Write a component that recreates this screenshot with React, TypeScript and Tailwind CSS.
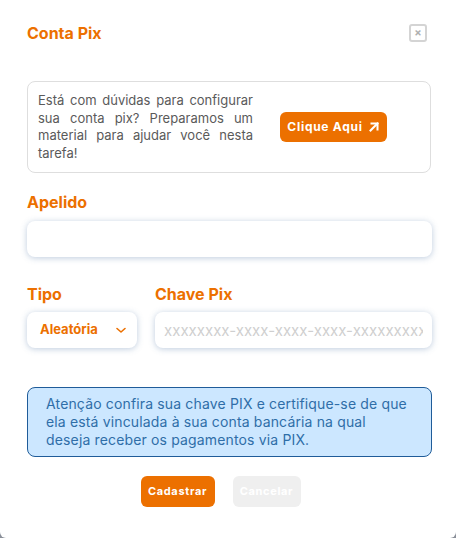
import React from "react";

export default function App() {
  const font = { fontFamily: "Inter, 'Noto Sans', sans-serif" };
  return (
    <div className="w-[456px] h-[538px] bg-[#8a8f99]" style={font}>
      <div className="w-full h-full bg-white rounded-b-[6px] pl-[27px] pr-[24px] pt-[21px] flex flex-col">
        <div className="flex items-center justify-between h-[24px]">
          <h1 className="text-[16px] leading-[24px] font-bold text-[#ec7000]">Conta Pix</h1>
          <button className="mr-[5px] mt-[-1px] w-[18px] h-[18px] border-2 border-[#d4d4d4] rounded-[3px] flex items-center justify-center text-[#b0b0b0] text-[11px] leading-none font-bold">
            ×
          </button>
        </div>

        <div className="mt-[36px] mr-[1px] border border-[#dedede] rounded-[8px] px-[10px] py-[10px] flex items-center">
          <p className="w-[215px] text-[13px] leading-[17.5px] text-[#5a5a5a] text-justify">
            Está com dúvidas para configurar sua conta pix? Preparamos um material para ajudar você nesta tarefa!
          </p>
          <button className="ml-[27px] h-[30px] w-[107px] rounded-[6px] bg-[#ec7000] text-white text-[12px] font-bold tracking-[0.06em] flex items-center justify-center gap-[5px]">
            Clique Aqui
            <svg width="12" height="12" viewBox="0 0 12 12" fill="none" stroke="white" strokeWidth="2" strokeLinecap="square">
              <path d="M2.5 9.5 L9.5 2.5" />
              <path d="M3.5 2.5 H9.5 V8.5" />
            </svg>
          </button>
        </div>

        <label className="mt-[17px] text-[16px] leading-[24px] font-bold text-[#ec7000]">Apelido</label>
        <input
          className="mt-[7px] h-[36px] w-full rounded-[8px] bg-white shadow-[0_1px_6px_rgba(70,110,160,0.35)] outline-none px-[10px] text-[13px]"
        />

        <div className="mt-[25px] flex gap-[18px]">
          <div className="flex flex-col w-[110px]">
            <span className="text-[16px] leading-[24px] font-bold text-[#ec7000]">Tipo</span>
            <div className="mt-[6px] h-[36px] rounded-[8px] bg-white shadow-[0_1px_6px_rgba(70,110,160,0.35)] flex items-center justify-between pl-[13px] pr-[10px]">
              <span className="text-[13px] font-bold text-[#ec7000]">Aleatória</span>
              <svg width="12" height="8" viewBox="0 0 12 8" fill="none" stroke="#ec7000" strokeWidth="1.6" strokeLinecap="round" strokeLinejoin="round">
                <path d="M2 2.5 L6 6 L10 2.5" />
              </svg>
            </div>
          </div>
          <div className="flex flex-col flex-1 min-w-0">
            <span className="text-[16px] leading-[24px] font-bold text-[#ec7000]">Chave Pix</span>
            <input
              placeholder="xxxxxxxx-xxxx-xxxx-xxxx-xxxxxxxxxxxx"
              className="mt-[6px] h-[36px] w-full rounded-[8px] bg-white shadow-[0_1px_6px_rgba(70,110,160,0.35)] outline-none px-[9px] text-[15px] placeholder:text-[#cfcfcf]"
            />
          </div>
        </div>

        <div className="mt-[39px] bg-[#cce7ff] border border-[#1f5c99] rounded-[8px] pl-[18px] pr-[8px] py-[7px] text-[14px] leading-[18px] tracking-[0.15px] text-[#2f6ea8] whitespace-nowrap">
          Atenção confira sua chave PIX e certifique-se de que
          <br />
          ela está vinculada à sua conta bancária na qual
          <br />
          deseja receber os pagamentos via PIX.
        </div>

        <div className="mt-[19px] flex justify-center gap-[18px] pr-[18px]">
          <button className="h-[31px] w-[74px] rounded-[6px] bg-[#ec7000] text-white text-[11px] font-bold tracking-[0.06em]">
            Cadastrar
          </button>
          <button className="h-[31px] w-[68px] rounded-[6px] bg-[#efefef] text-white text-[11px] font-bold tracking-[0.06em]">
            Cancelar
          </button>
        </div>
      </div>
    </div>
  );
}
